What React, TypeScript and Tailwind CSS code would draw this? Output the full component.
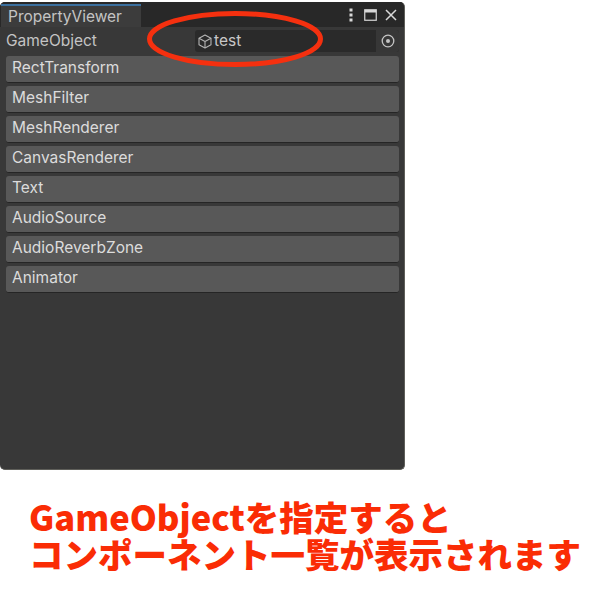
import React from 'react';

const components = [
  'RectTransform',
  'MeshFilter',
  'MeshRenderer',
  'CanvasRenderer',
  'Text',
  'AudioSource',
  'AudioReverbZone',
  'Animator',
];

function CubeIcon() {
  return (
    <svg className="w-[14px] h-[15px] shrink-0" viewBox="0 0 14 15" fill="none" stroke="#b4b4b4" strokeWidth={1.1} aria-hidden="true">
      <path d="M7 1L13 4.2V10.8L7 14L1 10.8V4.2Z" strokeLinejoin="round" />
      <path d="M1 4.2L7 7.4L13 4.2M7 7.4V14" strokeLinejoin="round" />
    </svg>
  );
}

function WindowControls() {
  return (
    <div className="flex items-center h-full">
      {/* Kebab */}
      <svg className="w-[4px] h-[14px] mr-[11px]" viewBox="0 0 4 14" fill="#d8d8d8" aria-hidden="true">
        <rect x="0.5" y="0.5" width="3" height="3" />
        <rect x="0.5" y="5.5" width="3" height="3" />
        <rect x="0.5" y="10.5" width="3" height="3" />
      </svg>
      {/* Maximize */}
      <svg className="w-[13px] h-[12px] mr-[8px]" viewBox="0 0 13 12" fill="none" stroke="#d8d8d8" aria-hidden="true">
        <rect x="0.75" y="0.75" width="11.5" height="10.5" strokeWidth={1.2} />
        <path d="M0.75 2.2H12.25" strokeWidth={2.5} />
      </svg>
      {/* Close */}
      <svg className="w-[12px] h-[12px] mr-[7px]" viewBox="0 0 12 12" fill="none" stroke="#d8d8d8" strokeWidth={1.5} aria-hidden="true">
        <path d="M1 1L11 11M11 1L1 11" />
      </svg>
    </div>
  );
}

export default function App() {
  return (
    <div className="relative w-[602px] h-[609px] bg-white overflow-hidden font-['Inter',sans-serif]">
      <div className="pt-[2px] w-[405px]">
        <div className="h-[468px] rounded-[5px] bg-[#383838] border-b border-r border-[#5f5f5a] flex flex-col overflow-hidden">
          {/* Tab strip */}
          <div className="h-[25px] shrink-0 bg-[#282828] flex items-end justify-between">
            <div className="w-[140px] h-[23px] ml-px bg-[#3c3c3c] border-t-2 border-[#3a6f9e] pl-[7px] flex items-center text-[15.5px] text-[#c4c4c4]">
              PropertyViewer
            </div>
            <WindowControls />
          </div>

          {/* GameObject field */}
          <div className="h-[28px] shrink-0 flex items-center pl-[6px] pr-[5px] text-[15.5px] text-[#c4c4c4]">
            <span className="w-[189px]">GameObject</span>
            <div className="flex-1 h-[22px] rounded-[3px] bg-[#2a2a2a] flex items-center overflow-hidden">
              <div className="flex-1 flex items-center gap-[2px] pl-[3px]">
                <CubeIcon />
                <span className="text-[#c8c8c8]">test</span>
              </div>
              <div className="w-[23px] h-full bg-[#373737] flex items-center justify-center">
                <svg className="w-[14px] h-[14px]" viewBox="0 0 14 14" fill="none" aria-hidden="true">
                  <circle cx="7" cy="7" r="5.8" stroke="#c4c4c4" strokeWidth={1.3} />
                  <circle cx="7" cy="7" r="2" fill="#c4c4c4" />
                </svg>
              </div>
            </div>
          </div>

          {/* Component buttons */}
          <div className="flex flex-col gap-[3px] pl-[6px] pr-[5px] pt-px">
            {components.map((name) => (
              <div
                key={name}
                className="h-[27px] rounded-[3px] bg-[#585858] border-b border-[#252525] pl-[6px] pb-[2px] flex items-center text-[15.5px] text-[#dcdcdc]"
              >
                {name}
              </div>
            ))}
          </div>
        </div>
      </div>

      {/* Hand-drawn annotation oval */}
      <svg className="absolute left-[146px] top-[10px] w-[178px] h-[58px]" viewBox="0 0 178 58" fill="none" aria-hidden="true">
        <ellipse cx="89" cy="29" rx="85.5" ry="25.5" stroke="#f5300f" strokeWidth={5} />
      </svg>

      {/* Caption */}
      <div className="pl-[29px] pt-[28px] font-['Noto_Sans_CJK_JP',sans-serif] font-black text-[34.5px] leading-[37px] text-[#fa2c05] whitespace-nowrap">
        <div>GameObjectを指定すると</div>
        <div>コンポーネント一覧が表示されます</div>
      </div>
    </div>
  );
}
